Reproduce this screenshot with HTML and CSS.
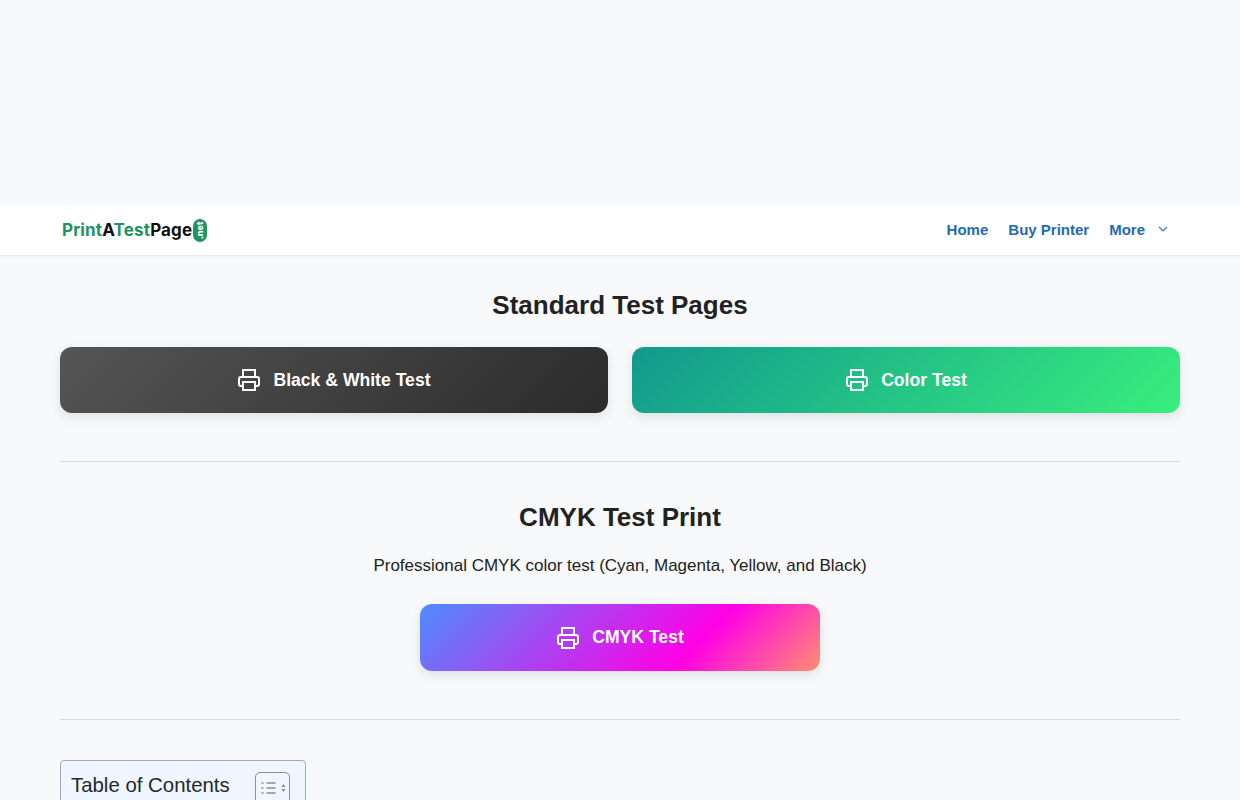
FILE: index.html
```html
<!DOCTYPE html>
<html lang="en">
<head>
  <meta charset="UTF-8">
  <meta name="viewport" content="width=device-width, initial-scale=1.0">
  <title>Print A Test Page</title>
  <link rel="stylesheet" href="styles.css">
</head>
<body>
<div class="ad-space"></div>

<header class="site-header">
  <a class="logo" href="#">
    <span class="logo-text"><span class="green">Print</span>A<span class="green">Test</span>Page</span>
    <span class="logo-badge"><span>.net</span></span>
  </a>
  <nav class="main-nav">
    <a href="#">Home</a>
    <a href="#">Buy Printer</a>
    <a href="#" class="more">More
      <svg class="chevron" viewBox="0 0 10 6" width="10" height="6" fill="none" stroke="currentColor" stroke-width="1.2"><path d="M1 1l4 4 4-4"/></svg>
    </a>
  </nav>
</header>

<main class="content">
  <section class="test-section">
    <h2>Standard Test Pages</h2>
    <div class="button-row">
      <a href="#" class="print-btn bw">
        <svg class="printer" viewBox="0 0 24 24"><path d="M6 9V2h12v7"/><path d="M6 18H4a2 2 0 0 1-2-2v-5a2 2 0 0 1 2-2h16a2 2 0 0 1 2 2v5a2 2 0 0 1-2 2h-2"/><path d="M6 14h12v8H6z"/></svg>
        Black &amp; White Test
      </a>
      <a href="#" class="print-btn color">
        <svg class="printer" viewBox="0 0 24 24"><path d="M6 9V2h12v7"/><path d="M6 18H4a2 2 0 0 1-2-2v-5a2 2 0 0 1 2-2h16a2 2 0 0 1 2 2v5a2 2 0 0 1-2 2h-2"/><path d="M6 14h12v8H6z"/></svg>
        Color Test
      </a>
    </div>
  </section>

  <hr>

  <section class="test-section">
    <h2>CMYK Test Print</h2>
    <p class="lead">Professional CMYK color test (Cyan, Magenta, Yellow, and Black)</p>
    <a href="#" class="print-btn cmyk">
      <svg class="printer" viewBox="0 0 24 24"><path d="M6 9V2h12v7"/><path d="M6 18H4a2 2 0 0 1-2-2v-5a2 2 0 0 1 2-2h16a2 2 0 0 1 2 2v5a2 2 0 0 1-2 2h-2"/><path d="M6 14h12v8H6z"/></svg>
      CMYK Test
    </a>
  </section>

  <hr>

  <div class="toc">
    <div class="toc-head">
      <span class="toc-title">Table of Contents</span>
      <span class="toc-toggle">
        <svg viewBox="0 0 26 16" width="26" height="16" fill="none" stroke="#858c95">
          <path d="M6.500 3h9M6.500 8h9M6.500 13h9" stroke-width="1.400"/>
          <path d="M1.500 3h2M1.500 8h2M1.500 13h2" stroke-width="1.400"/>
          <path d="M21.500 7l2-3 2 3zM21.500 9l2 3 2-3z" fill="#858c95" stroke="none"/>
        </svg>
      </span>
    </div>
  </div>
</main>
</body>
</html>
```
FILE: styles.css
```css
* {
    margin: 0;
    padding: 0;
    box-sizing: border-box;
}

html, body {
    height: 800px;
    overflow: hidden;
}

body {
    background-color: #f8f9fb;
    color: #222;
    font-family: 'Liberation Sans', Arial, sans-serif;
}

a {
    text-decoration: none;
}

.ad-space {
    height: 205px;
}

.site-header {
    height: 50px;
    padding: 0 60px 0 62px;
    background-color: #fff;
    display: flex;
    justify-content: space-between;
    align-items: center;
    box-shadow: 0 1px 2px rgba(0,0,0,0.08);
}

.logo {
    display: flex;
    align-items: center;
    gap: 1px;
}

.logo-text {
    font-family: Inter, 'Noto Sans', sans-serif;
    font-size: 17px;
    font-weight: 700;
    letter-spacing: 0.15px;
    color: #111;
}

.logo-text .green {
    color: #1f9360;
}

.logo-badge {
    width: 14px;
    height: 23px;
    border-radius: 7px;
    background-color: #1f9360;
    display: flex;
    align-items: center;
    justify-content: center;
}

.logo-badge span {
    font-family: Inter, sans-serif;
    font-size: 9px;
    font-weight: 800;
    color: #fff;
    transform: rotate(-90deg);
}

.main-nav {
    display: flex;
    align-items: center;
    gap: 20px;
    padding: 0 12px 2px 0;
}

.main-nav a {
    color: #1e6bb0;
    font-size: 15px;
    font-weight: 700;
}

.main-nav .more {
    display: flex;
    align-items: center;
    gap: 13px;
}

.chevron {
    color: #3a7ab5;
}

.content {
    padding: 0 60px;
}

.test-section {
    text-align: center;
}

.test-section h2 {
    font-size: 26px;
    font-weight: 700;
    line-height: 32px;
    color: #222;
}

.content > .test-section:first-child {
    padding-top: 34px;
}

.content > .test-section:first-child h2 {
    margin-bottom: 26px;
}

.button-row {
    display: grid;
    grid-template-columns: 1fr 1fr;
    gap: 24px;
}

.print-btn {
    height: 66px;
    border-radius: 12px;
    color: #fff;
    font-size: 17.6px;
    font-weight: 700;
    display: flex;
    align-items: center;
    justify-content: center;
    gap: 12px;
    box-shadow: 0 4px 12px rgba(0,0,0,0.1);
}

.printer {
    width: 24px;
    height: 24px;
    fill: none;
    stroke: #fff;
    stroke-width: 2;
}

.print-btn.bw {
    background: linear-gradient(135deg, #555, #2b2b2b);
}

.print-btn.color {
    background: linear-gradient(135deg, #11998e, #38ef7d);
}

.print-btn.cmyk {
    width: 400px;
    height: 67px;
    margin: 0 auto;
    background: linear-gradient(135deg, #4d8dff, #ff00e5 68%, #ff8f70);
}

hr {
    border: 0;
    height: 1px;
    background-color: #d9dadb;
    margin: 48px 0 39px;
}

.lead {
    font-size: 17px;
    line-height: 26px;
    margin: 20px 0 25px;
    color: #222;
}

.toc {
    width: 246px;
    height: 120px;
    margin-top: 40px;
    padding: 10px;
    background-color: #eff6ff;
    border: 1px solid #a2a9b1;
    border-radius: 4px;
}

.toc-head {
    display: flex;
    align-items: flex-start;
    justify-content: space-between;
    padding-right: 5px;
}

.toc-title {
    font-size: 20.4px;
    line-height: 28px;
    color: #23282d;
}

.toc-toggle {
    width: 35px;
    height: 34px;
    margin-top: 1px;
    padding-bottom: 2px;
    border: 1px solid #8a9099;
    border-radius: 5px;
    display: flex;
    align-items: center;
    justify-content: center;
}
```
